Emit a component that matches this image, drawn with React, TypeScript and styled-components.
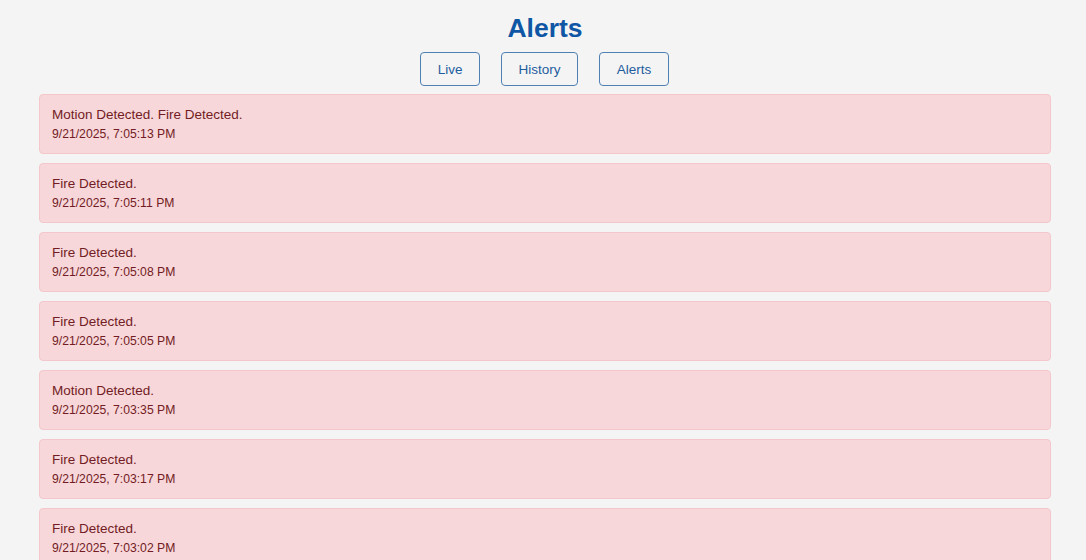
import React from "react";
import styled, { createGlobalStyle } from "styled-components";

const Global = createGlobalStyle`
  html, body { margin: 0; padding: 0; background: #f4f4f4; }
  body { font-family: "Liberation Sans", Arial, sans-serif; }
`;

const Page = styled.div`
  display: flex;
  flex-direction: column;
  align-items: center;
  padding: 13px 35px 0 39px;
`;

const Title = styled.h1`
  margin: 0;
  font-size: 26.5px;
  font-weight: 700;
  color: #0f57a5;
  line-height: 30px;
`;

const Nav = styled.nav`
  display: flex;
  gap: 21px;
  margin-top: 9px;
  margin-left: -1px;
`;

const NavButton = styled.button`
  height: 34px;
  padding: 0 16.5px;
  border: 1px solid #4f80b4;
  border-radius: 4px;
  background: #f4f4f4;
  color: #1f5d9e;
  font-family: "Liberation Sans", Arial, sans-serif;
  font-size: 13.5px;
  cursor: pointer;
`;

const List = styled.div`
  display: flex;
  flex-direction: column;
  gap: 9px;
  width: 100%;
  margin-top: 8px;
`;

const AlertCard = styled.div`
  background: #f8d7da;
  border: 1px solid #f3c7cc;
  border-radius: 4px;
  color: #721c24;
  padding: 10px 12px 11px;
`;

const Message = styled.div`
  font-size: 13.5px;
  line-height: 19px;
`;

const Time = styled.div`
  font-size: 12.2px;
  line-height: 16px;
  margin-top: 2px;
`;

const alerts = [
  ["Motion Detected. Fire Detected.", "9/21/2025, 7:05:13 PM"],
  ["Fire Detected.", "9/21/2025, 7:05:11 PM"],
  ["Fire Detected.", "9/21/2025, 7:05:08 PM"],
  ["Fire Detected.", "9/21/2025, 7:05:05 PM"],
  ["Motion Detected.", "9/21/2025, 7:03:35 PM"],
  ["Fire Detected.", "9/21/2025, 7:03:17 PM"],
  ["Fire Detected.", "9/21/2025, 7:03:02 PM"],
];

export default function App() {
  return (
    <>
      <Global />
      <Page>
        <Title>Alerts</Title>
        <Nav>
          <NavButton>Live</NavButton>
          <NavButton>History</NavButton>
          <NavButton>Alerts</NavButton>
        </Nav>
        <List>
          {alerts.map(([msg, time], i) => (
            <AlertCard key={i}>
              <Message>{msg}</Message>
              <Time>{time}</Time>
            </AlertCard>
          ))}
        </List>
      </Page>
    </>
  );
}
